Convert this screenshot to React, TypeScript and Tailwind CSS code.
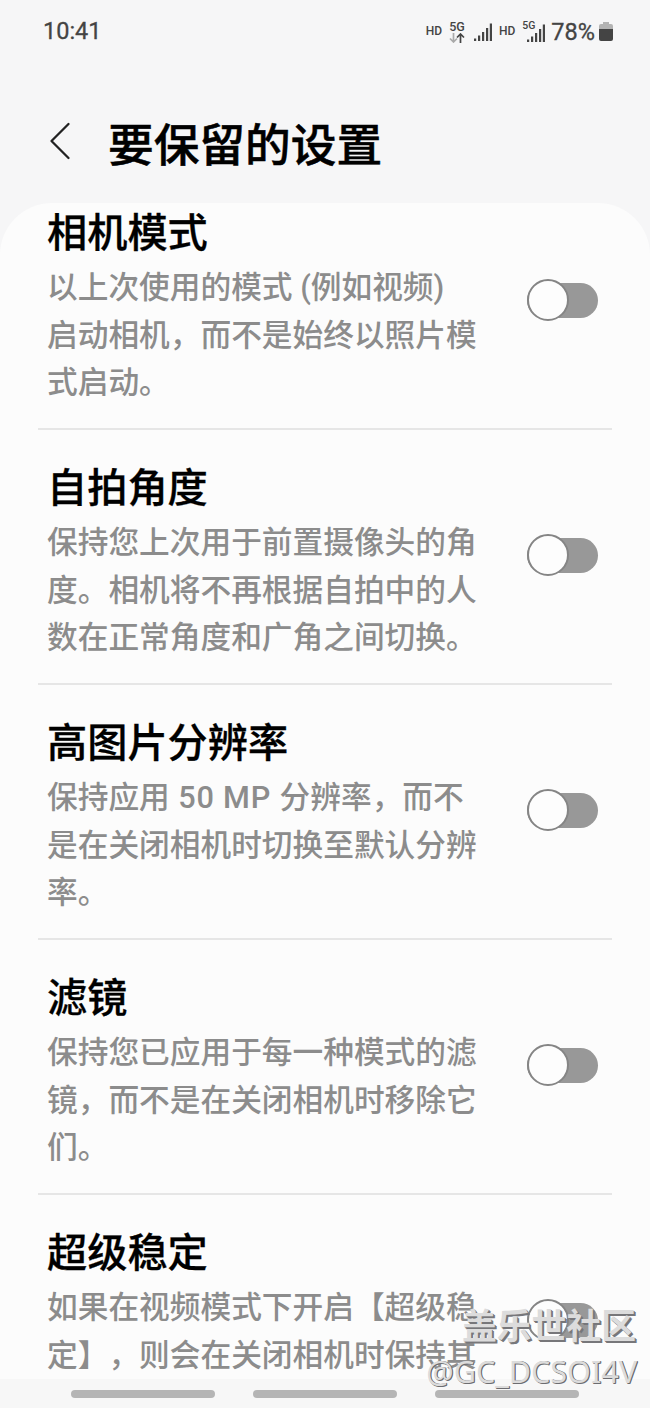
// App.tsx
const rows = [
  {
    title: '相机模式',
    lines: ['以上次使用的模式 (例如视频)', '启动相机，而不是始终以照片模', '式启动。'],
  },
  {
    title: '自拍角度',
    lines: ['保持您上次用于前置摄像头的角', '度。相机将不再根据自拍中的人', '数在正常角度和广角之间切换。'],
  },
  {
    title: '高图片分辨率',
    lines: [
      <>
        保持应用<span className="tracking-[0.8px]"> 50 MP </span>分辨率，而不
      </>,
      '是在关闭相机时切换至默认分辨',
      '率。',
    ],
  },
  {
    title: '滤镜',
    lines: ['保持您已应用于每一种模式的滤', '镜，而不是在关闭相机时移除它', '们。'],
  },
  {
    title: '超级稳定',
    lines: ['如果在视频模式下开启【超级稳', '定】，则会在关闭相机时保持其'],
  },
]

function Signal({ className }: { className: string }) {
  return (
    <svg className={className} viewBox="0 0 18 18" fill="#444">
      <rect x="0" y="15.5" width="2.2" height="2.5" />
      <rect x="4" y="12.5" width="2.2" height="5.5" />
      <rect x="8" y="9" width="2.2" height="9" />
      <rect x="12" y="5" width="2.2" height="13" />
      <rect x="15.8" y="0.5" width="2.2" height="17.5" />
    </svg>
  )
}

function StatusBar() {
  return (
    <div className="flex h-16 items-center justify-between pl-[43px] pr-[37px] font-['Roboto',sans-serif] text-[#444]">
      <span className="text-[23.5px] leading-none [-webkit-text-stroke:0.3px_#444]">10:41</span>
      <div className="flex h-[26px] items-center">
        <span className="-mt-0.5 text-[12px] font-medium leading-none">HD</span>
        <div className="-mt-0.5 ml-[7px] flex w-4 flex-col items-center">
          <span className="text-[12.5px] font-medium leading-[13px]">5G</span>
          <svg className="h-[10px] w-4" viewBox="0 0 16 10" fill="none" strokeWidth="1.7">
            <path d="M4.5 0v9M1 5.5l3.5 3.5L8 5.5" stroke="#aaa" />
            <path d="M11.5 10V1M8 4.5 11.5 1 15 4.5" stroke="#444" />
          </svg>
        </div>
        <Signal className="ml-[9px] h-[18px] w-[18px]" />
        <span className="-mt-0.5 ml-[7px] text-[12px] font-medium leading-none">HD</span>
        {/* 第二张卡：5G 叠在信号格左上 */}
        <div className="relative ml-[7px] flex h-[20px] w-[23px] items-end justify-end">
          <span className="absolute -top-px left-0 text-[10.5px] font-medium leading-none">5G</span>
          <Signal className="h-[18px] w-[18px]" />
        </div>
        <span className="ml-[6px] mt-0.5 text-[23.5px] leading-none [-webkit-text-stroke:0.3px_#444]">78%</span>
        <svg className="-mt-0.5 ml-1 h-[19px] w-[14px]" viewBox="0 0 14 19">
          <path d="M4 0h6v2h2a2 2 0 0 1 2 2v4H0V4a2 2 0 0 1 2-2h2z" fill="#b3b3b3" />
          <path d="M0 7h14v10a2 2 0 0 1-2 2H2a2 2 0 0 1-2-2z" fill="#444" />
        </svg>
      </div>
    </div>
  )
}

function Toggle() {
  return (
    <div className="mr-[14px] mt-[104px] flex h-[42px] w-[71px] shrink-0 items-center">
      <div className="flex h-[35px] w-full items-center rounded-full bg-[#989898]">
        <div className="size-[42px] shrink-0 rounded-full border-2 border-[#858585] bg-[#fdfdfd]" />
      </div>
    </div>
  )
}

export default function App() {
  return (
    <div className="relative flex h-[1408px] w-[650px] flex-col overflow-hidden bg-[#f6f6f7] font-['Roboto','Noto_Sans_CJK_SC',sans-serif] [text-spacing-trim:space-all]">
      <StatusBar />

      <header className="flex h-[139px] shrink-0 items-center pl-[49px]">
        <svg className="mt-3.5 h-[38px] w-[22px]" viewBox="0 0 22 38" fill="none" stroke="#222" strokeWidth="2.3" strokeLinecap="round" strokeLinejoin="round">
          <path d="M19.5 2 2.5 19l17 17" />
        </svg>
        <h1 className="ml-[37px] mt-[26px] text-[45.7px] font-medium leading-none text-black [-webkit-text-stroke:0.5px_black]">要保留的设置</h1>
      </header>

      <main className="min-h-0 flex-1 overflow-hidden rounded-t-[52px] bg-[#fcfcfc] px-[38px]">
        {/* 列表已向上滚动一小段 */}
        <div className="-mt-[28px]">
          {rows.map((row) => (
            <section key={row.title} className="flex h-[255px] items-start justify-between border-b-2 border-[#e6e6e6] pl-[9px]">
              <div className="whitespace-nowrap pt-[29px]">
                <h2 className="h-[60px] text-[40.2px] font-medium leading-[60px] text-black [-webkit-text-stroke:0.3px_black]">{row.title}</h2>
                {row.lines.map((line, i) => (
                  <p key={i} className="h-[47.6px] text-[30.7px] font-medium leading-[47.6px] text-[#8c8c8c]">
                    {line}
                  </p>
                ))}
              </div>
              <Toggle />
            </section>
          ))}
        </div>
      </main>

      <nav className="flex h-[29px] shrink-0 items-center justify-center gap-[38px] bg-[#f7f7f7]">
        <span className="h-2 w-36 rounded-full bg-[#b5b5b5]" />
        <span className="h-2 w-36 rounded-full bg-[#b5b5b5]" />
        <span className="h-2 w-36 rounded-full bg-[#b5b5b5]" />
      </nav>

      {/* 水印 */}
      <div className="absolute bottom-[16px] right-[13px] flex flex-col items-end whitespace-nowrap text-[#dcdcdc]">
        <span className="mr-px text-[34.8px] font-bold leading-[46px] [text-shadow:1px_1px_0_#77777a,2px_2px_0_#77777a]">盖乐世社区</span>
        <span className="font-['Noto_Sans',sans-serif] text-[30.5px] leading-[42px] [text-shadow:1px_1px_0_#6c6c70,1px_0_0_#6c6c70]">@GC_DCSOI4V</span>
      </div>
    </div>
  )
}
